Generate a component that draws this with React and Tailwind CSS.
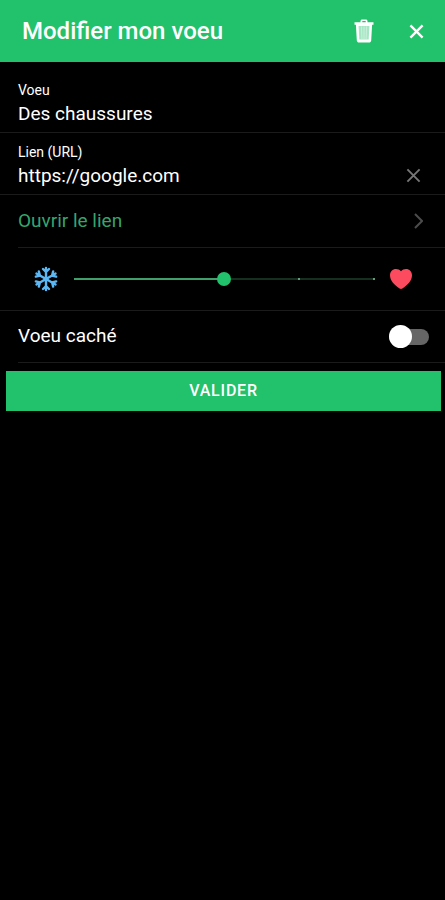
import React, { useState } from 'react'

const CloseIcon = ({ className }) => (
  <svg className={className} viewBox="0 0 16 16" fill="none" stroke="currentColor" aria-hidden="true">
    <path d="M1.5 1.5 14.5 14.5M14.5 1.5 1.5 14.5" />
  </svg>
)

const TrashIcon = ({ className }) => (
  <svg className={className} viewBox="0 0 20 24" aria-hidden="true">
    <path
      fill="currentColor"
      fillRule="evenodd"
      d="M6.500 3.200V2.100C6.500 1.200 7.200.5 8.100.5h3.800c.9 0 1.600.7 1.600 1.600v1.100h6v2.600h-1.400l-.9 15.600c-.1 1.200-1 2.100-2.200 2.100H5c-1.200 0-2.100-.9-2.200-2.100L1.900 5.800H.5V3.200zM8.300 3.200h3.400V2.100H8.300z"
    />
    <path fill="#22c16b" fillOpacity=".4" d="M4.600 7h10.800l-.7 13.500H5.300z" />
    <path stroke="currentColor" strokeOpacity=".4" d="M7.500 7.500l.4 12.500M10 7.500V20M12.500 7.500 12.100 20" />
  </svg>
)

const SnowIcon = ({ className }) => (
  <svg
    className={className}
    viewBox="-12 -13 24 26"
    fill="none"
    stroke="#5bb8f5"
    strokeWidth="2.4"
    strokeLinecap="round"
    strokeLinejoin="round"
    aria-hidden="true"
  >
    {[0, 60, 120, 180, 240, 300].map((angle) => (
      <path key={angle} transform={`rotate(${angle})`} d="M0 0V-11M-3-10 0-7 3-10" />
    ))}
    <circle r="2.5" fill="#5bb8f5" stroke="none" />
  </svg>
)

const HeartIcon = ({ className }) => (
  <svg className={className} viewBox="0 0 22 20" aria-hidden="true">
    <path
      fill="#fc4a5f"
      d="M11 2.300C12.300.8 14.100 0 16 0c3.400 0 6 2.700 6 6.300 0 5.700-4.600 10-9.600 13.200-.9.600-1.900.6-2.800 0C4.600 16.300 0 12 0 6.300 0 2.700 2.600 0 6 0c1.900 0 3.700.8 5 2.300z"
    />
  </svg>
)

const STEPS = [0, 1, 2, 3, 4]

const App = () => {
  const [name, setName] = useState('Des chaussures')
  const [url, setUrl] = useState('https://google.com')
  const [desire, setDesire] = useState(2)
  const [hidden, setHidden] = useState(false)

  return (
    <div className="min-h-screen bg-black text-white font-['Roboto',sans-serif]">
      <header className="flex h-[62px] items-center bg-[#22c16b] pl-[22px] pr-[5px]">
        <h1 className="flex-1 text-2xl font-medium">Modifier mon voeu</h1>
        <button type="button" aria-label="Supprimer" className="flex size-12 items-center justify-center">
          <TrashIcon className="h-6 w-5" />
        </button>
        <button type="button" aria-label="Fermer" className="ml-1 flex size-12 items-center justify-center">
          <CloseIcon className="size-[15px] stroke-[2.5]" />
        </button>
      </header>

      <form onSubmit={(e) => e.preventDefault()}>
        <div className="border-b border-[#1b1b1b] px-[18px] pt-5 pb-1">
          <label htmlFor="name" className="block text-sm leading-4">Voeu</label>
          <input
            id="name"
            type="text"
            value={name}
            onChange={(e) => setName(e.target.value)}
            className="block h-[30px] w-full bg-transparent text-[19px] outline-none"
          />
        </div>

        <div className="flex items-end border-b border-[#1b1b1b] pt-[11px] pb-1 pl-[18px] pr-4">
          <div className="min-w-0 flex-1">
            <label htmlFor="url" className="block text-sm leading-4">Lien (URL)</label>
            <input
              id="url"
              type="text"
              value={url}
              onChange={(e) => setUrl(e.target.value)}
              className="block h-[30px] w-full bg-transparent text-[19px] outline-none"
            />
          </div>
          <button
            type="button"
            aria-label="Effacer"
            onClick={() => setUrl('')}
            className="flex h-[30px] w-8 items-center justify-center text-[#777777]"
          >
            <CloseIcon className="size-[15px] stroke-2" />
          </button>
        </div>

        <a href={url} className="ml-[18px] flex h-[53px] items-center justify-between border-b border-[#1b1b1b] pr-[22px] text-[#36a56d]">
          <span className="text-[19px]">Ouvrir le lien</span>
          <svg className="h-4 w-[9px] text-[#4c4c4c]" viewBox="0 0 9 16" fill="none" stroke="currentColor" strokeWidth="2" aria-hidden="true">
            <path d="M1 1 8 8 1 15" />
          </svg>
        </a>

        <div className="flex h-[63px] items-center border-b border-[#1b1b1b] pl-[34px] pr-[33px]">
          <SnowIcon className="h-[26px] w-6" />
          <div className="relative mx-[9px] flex h-6 flex-1 items-center">
            <div className="absolute inset-x-[7px] h-[2px] bg-[#15301f]">
              <div className="h-full bg-[#3fa06c]" style={{ width: `${desire * 25}%` }} />
              {STEPS.filter((step) => step > desire).map((step) => (
                <span
                  key={step}
                  className="absolute top-0 size-[2px] -translate-x-px bg-[#5f9f7c]"
                  style={{ left: `${step * 25}%` }}
                />
              ))}
            </div>
            <input
              type="range"
              min="0"
              max="4"
              step="1"
              value={desire}
              onChange={(e) => setDesire(Number(e.target.value))}
              aria-label="Envie"
              className="relative h-6 w-full appearance-none bg-transparent outline-none [&::-webkit-slider-thumb]:size-[14px] [&::-webkit-slider-thumb]:appearance-none [&::-webkit-slider-thumb]:rounded-full [&::-webkit-slider-thumb]:bg-[#22c16b]"
            />
          </div>
          <HeartIcon className="h-5 w-[22px]" />
        </div>

        <div className="ml-[18px] flex h-[52px] items-center justify-between border-b border-[#1b1b1b] pr-4">
          <label htmlFor="hidden" className="text-[19px]">Voeu caché</label>
          <div className="relative flex h-6 w-10 items-center">
            <input
              id="hidden"
              type="checkbox"
              checked={hidden}
              onChange={(e) => setHidden(e.target.checked)}
              className="peer h-4 w-full appearance-none rounded-full bg-[#666666] checked:bg-[#15703f]"
            />
            <span className="pointer-events-none absolute left-0 size-[23px] rounded-full bg-white peer-checked:right-0 peer-checked:left-auto" />
          </div>
        </div>

        <div className="pt-2 pl-[6px] pr-1">
          <button type="submit" className="h-10 w-full bg-[#22c16b] text-base font-medium tracking-wider uppercase">
            Valider
          </button>
        </div>
      </form>
    </div>
  )
}

export default App
